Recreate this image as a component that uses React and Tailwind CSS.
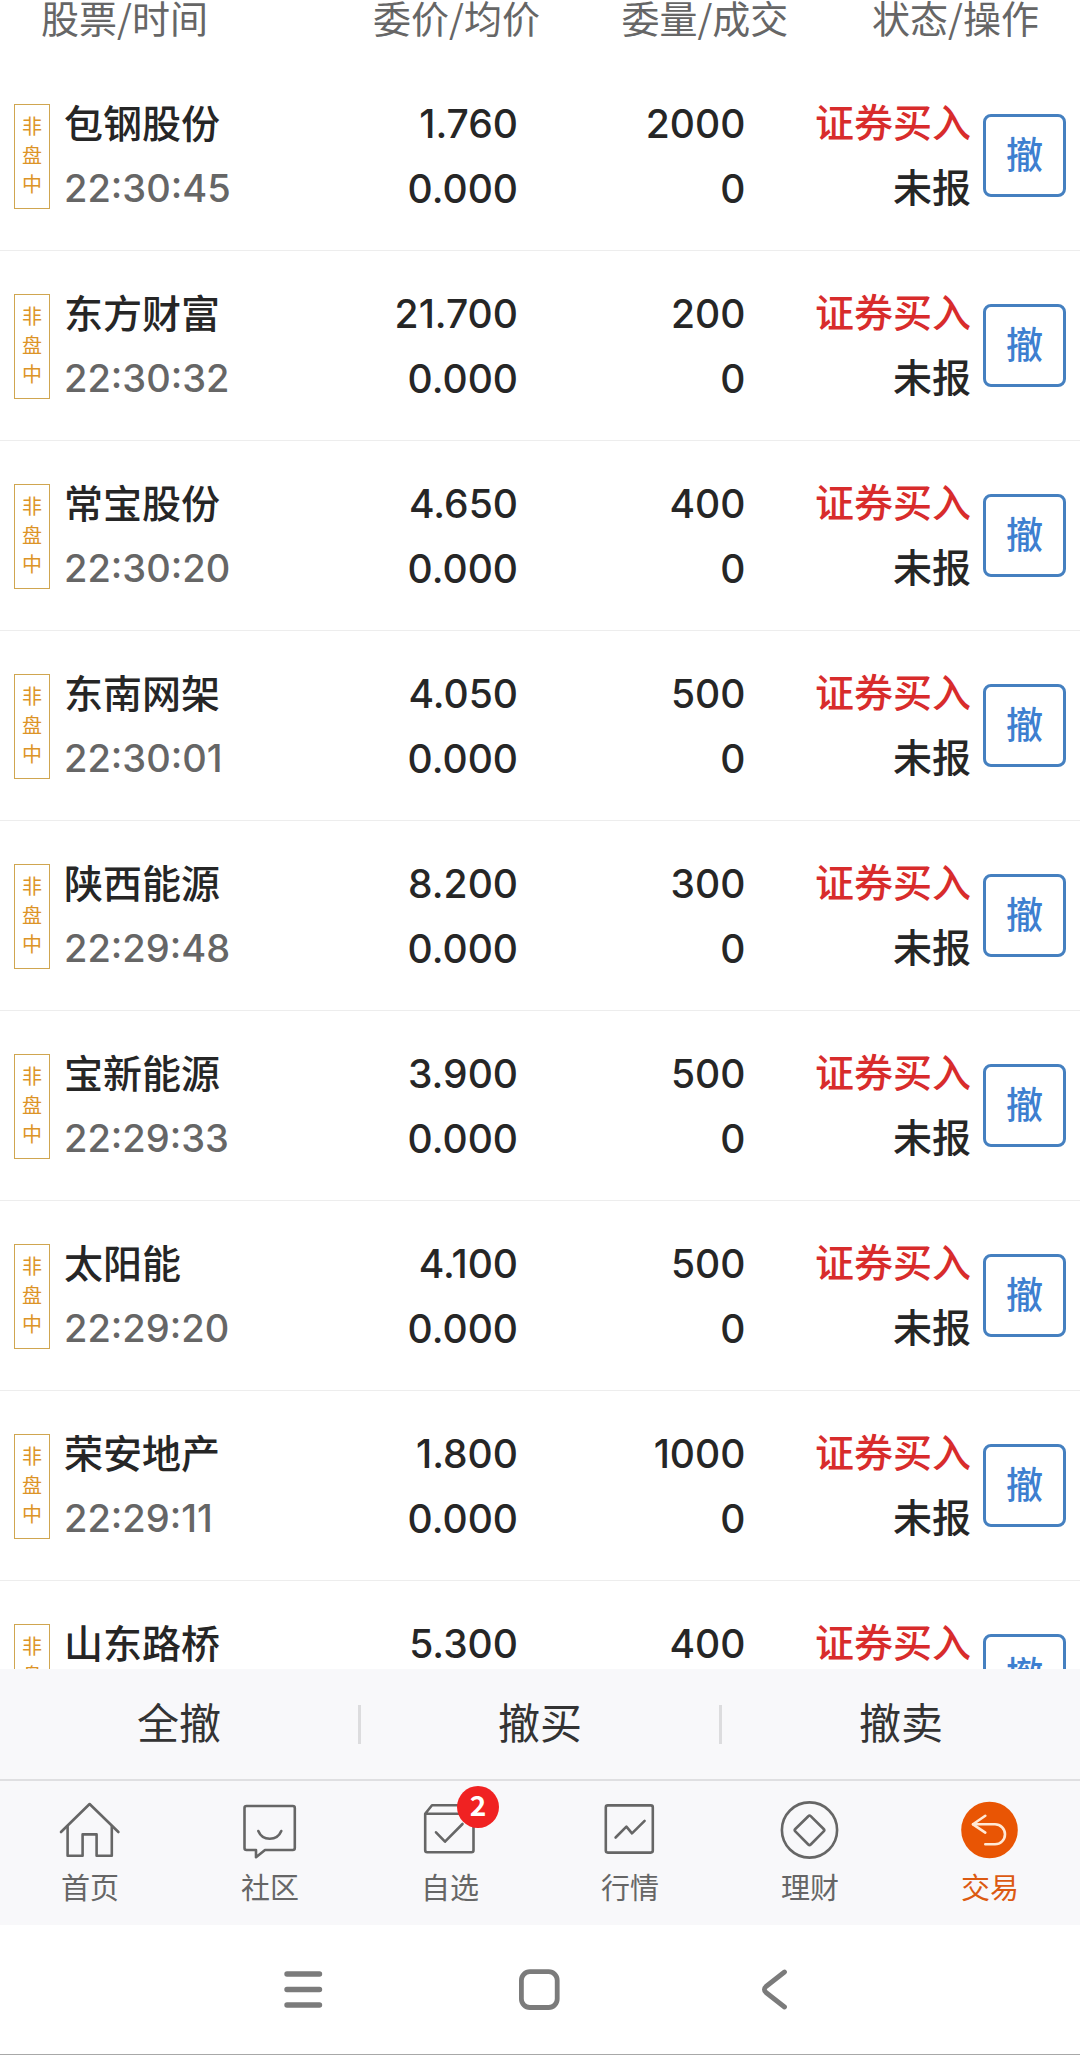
const orders = [
  { name: '包钢股份', time: '22:30:45', price: '1.760', qty: '2000' },
  { name: '东方财富', time: '22:30:32', price: '21.700', qty: '200' },
  { name: '常宝股份', time: '22:30:20', price: '4.650', qty: '400' },
  { name: '东南网架', time: '22:30:01', price: '4.050', qty: '500' },
  { name: '陕西能源', time: '22:29:48', price: '8.200', qty: '300' },
  { name: '宝新能源', time: '22:29:33', price: '3.900', qty: '500' },
  { name: '太阳能', time: '22:29:20', price: '4.100', qty: '500' },
  { name: '荣安地产', time: '22:29:11', price: '1.800', qty: '1000' },
  { name: '山东路桥', time: '', price: '5.300', qty: '400' },
]

function TabIcon({ children }) {
  return (
    <svg
      viewBox="0 0 60 60"
      className="h-[60px] w-[60px] overflow-visible"
      fill="none"
      stroke="currentColor"
      strokeWidth="2.6"
      strokeLinecap="round"
      strokeLinejoin="round"
      aria-hidden="true"
    >
      {children}
    </svg>
  )
}

const tabs = [
  {
    label: '首页',
    icon: (
      <TabIcon>
        <path d="M1 32 29.6 4 58.4 32" />
        <path d="M7.6 26.5V55.7H22.6V34.4H36.6V55.7H51.8V26.5" />
      </TabIcon>
    ),
  },
  {
    label: '社区',
    icon: (
      <TabIcon>
        <path d="M6.5 6H52.8a2 2 0 0 1 2 2V48a2 2 0 0 1-2 2H25L16 57.2V50H6.5a2 2 0 0 1-2-2V8a2 2 0 0 1 2-2Z" />
        <path d="M18.3 31C22.5 41.3 37 41.3 41.3 31" />
      </TabIcon>
    ),
  },
  {
    label: '自选',
    badge: 2,
    icon: (
      <TabIcon>
        <path d="M5.2 13.7H53.5V50.3a2 2 0 0 1-2 2H7.2a2 2 0 0 1-2-2V13.7L12 5.3H46.7L53.5 13.7" />
        <path d="M16 32.3 25 41.7 42.5 24" />
      </TabIcon>
    ),
  },
  {
    label: '行情',
    icon: (
      <TabIcon>
        <rect x="5.8" y="5.4" width="47" height="47.2" rx="2" />
        <path d="M15.6 37.5 26.4 26.7 32 33.3 44.6 20.8" />
      </TabIcon>
    ),
  },
  {
    label: '理财',
    icon: (
      <TabIcon>
        <circle cx="29.5" cy="30" r="27.6" />
        <path d="M28.3 16.2a1.7 1.7 0 0 1 2.4 0L43.7 29a1.7 1.7 0 0 1 0 2.4L30.7 44.5a1.7 1.7 0 0 1-2.4 0L15.3 31.4a1.7 1.7 0 0 1 0-2.4Z" />
      </TabIcon>
    ),
  },
  {
    label: '交易',
    active: true,
    icon: (
      <TabIcon>
        <circle cx="29.5" cy="30" r="28.3" fill="#e95504" stroke="none" />
        <g stroke="#ffe9d6">
          <path d="M25.3 15.8 13 24.3 25.3 32.6" />
          <path d="M13 24.3H35a10 10 0 0 1 0 20H25.3" />
        </g>
      </TabIcon>
    ),
  },
]

function OrderRow({ order }) {
  return (
    <tr className="border-b border-[#ededed] text-[39px] leading-[65px] font-medium whitespace-nowrap text-[#262626]">
      <td className="pt-[28px] pb-[27px] pl-[14px]">
        <div className="flex items-center gap-[14px]">
          <span className="flex w-9 shrink-0 flex-col items-center border border-[#d0a650] pt-[6px] pb-[10px] text-[20px] leading-[29px] font-normal text-[#dd9427]">
            <span>非</span>
            <span>盘</span>
            <span>中</span>
          </span>
          <div>
            <p>{order.name}</p>
            <p className="min-h-[69px] font-[Inter,sans-serif] text-[38px] leading-[69px] text-[#666]">{order.time}</p>
          </div>
        </div>
      </td>
      <td className="pr-[22px] text-right font-[Inter,sans-serif]">
        <p>{order.price}</p>
        <p>0.000</p>
      </td>
      <td className="pr-[43px] text-right font-[Inter,sans-serif]">
        <p>{order.qty}</p>
        <p>0</p>
      </td>
      <td className="pt-[27px] pb-[32px] text-right">
        <p className="text-[#d82c2c]">证券买入</p>
        <p>未报</p>
      </td>
      <td className="pl-3">
        <button
          type="button"
          className="flex h-[83px] w-[83px] items-center justify-center rounded-lg border-3 border-[#4580c0] pb-1 text-[37px] leading-none text-[#3d7fd0]"
        >
          撤
        </button>
      </td>
    </tr>
  )
}

function OrderTable() {
  return (
    <table className="w-full table-fixed border-collapse">
      <colgroup>
        <col className="w-[28%]" />
        <col className="w-[22%]" />
        <col className="w-[23%]" />
        <col />
        <col className="w-[109px]" />
      </colgroup>
      <thead>
        <tr className="text-right text-[38px] leading-[34px] whitespace-nowrap text-[#666]">
          <th className="pb-[27px] pl-[41px] text-left font-normal">股票/时间</th>
          <th className="pb-[27px] font-normal">委价/均价</th>
          <th className="pb-[27px] font-normal">委量/成交</th>
          <th colSpan="2" className="pr-[41px] pb-[27px] font-normal">状态/操作</th>
        </tr>
      </thead>
      <tbody>
        {orders.map((order) => (
          <OrderRow key={order.name} order={order} />
        ))}
      </tbody>
    </table>
  )
}

export default function App() {
  return (
    <div className="flex h-screen flex-col bg-white font-['Noto_Sans_CJK_SC',sans-serif]">
      <main className="min-h-0 flex-1 overflow-hidden">
        <OrderTable />
      </main>

      <div className="flex items-center border-b-2 border-[#dfdfe1] bg-[#f8f8fa] py-[25px] text-[42px] text-[#333]">
        <button type="button" className="flex-1 pb-[6px] leading-[54px]">全撤</button>
        <span className="h-[39px] w-[3px] bg-[#dcdcde]" />
        <button type="button" className="flex-1 pb-[6px] leading-[54px]">撤买</button>
        <span className="h-[39px] w-[3px] bg-[#dcdcde]" />
        <button type="button" className="flex-1 pb-[6px] leading-[54px]">撤卖</button>
      </div>

      <nav className="grid grid-cols-6 bg-[#f8f8fa]">
        {tabs.map((tab) => (
          <a
            key={tab.label}
            href="#"
            className={`flex flex-col items-center gap-[6px] pt-[19px] pb-[19px] ${tab.active ? 'text-[#dc5a12]' : 'text-[#666]'}`}
          >
            <span className="relative">
              {tab.icon}
              {tab.badge && (
                <span className="absolute -top-[14px] left-[37px] flex h-[42px] w-[42px] items-center justify-center rounded-full bg-[#f02222] pb-[6px] text-[28px] leading-none font-bold text-white">
                  {tab.badge}
                </span>
              )}
            </span>
            <span className="text-[29px] leading-10">{tab.label}</span>
          </a>
        ))}
      </nav>

      <div className="flex items-center justify-center gap-[196px] border-b border-[#a8a8a8] py-[44px] text-[#7b7b7b]">
        <button type="button" aria-label="菜单">
          <svg viewBox="0 0 40 41" className="h-[41px] w-10" stroke="currentColor" strokeWidth="5.4" strokeLinecap="round">
            <path d="M3 5H35.5M3 20.5H35.5M3 36H35.5" />
          </svg>
        </button>
        <button type="button" aria-label="主页">
          <svg viewBox="0 0 40 41" className="h-[41px] w-10 overflow-visible" fill="none" stroke="currentColor" strokeWidth="4.8">
            <rect x="1.4" y="2.7" width="35.8" height="35.8" rx="8.5" />
          </svg>
        </button>
        <button type="button" aria-label="返回">
          <svg viewBox="0 0 40 41" className="h-[41px] w-10" fill="none" stroke="currentColor" strokeWidth="4.8" strokeLinecap="round" strokeLinejoin="round">
            <path d="M28.5 3 10 17.5Q6.8 20.5 10 23.5L28.5 38" />
          </svg>
        </button>
      </div>
    </div>
  )
}
